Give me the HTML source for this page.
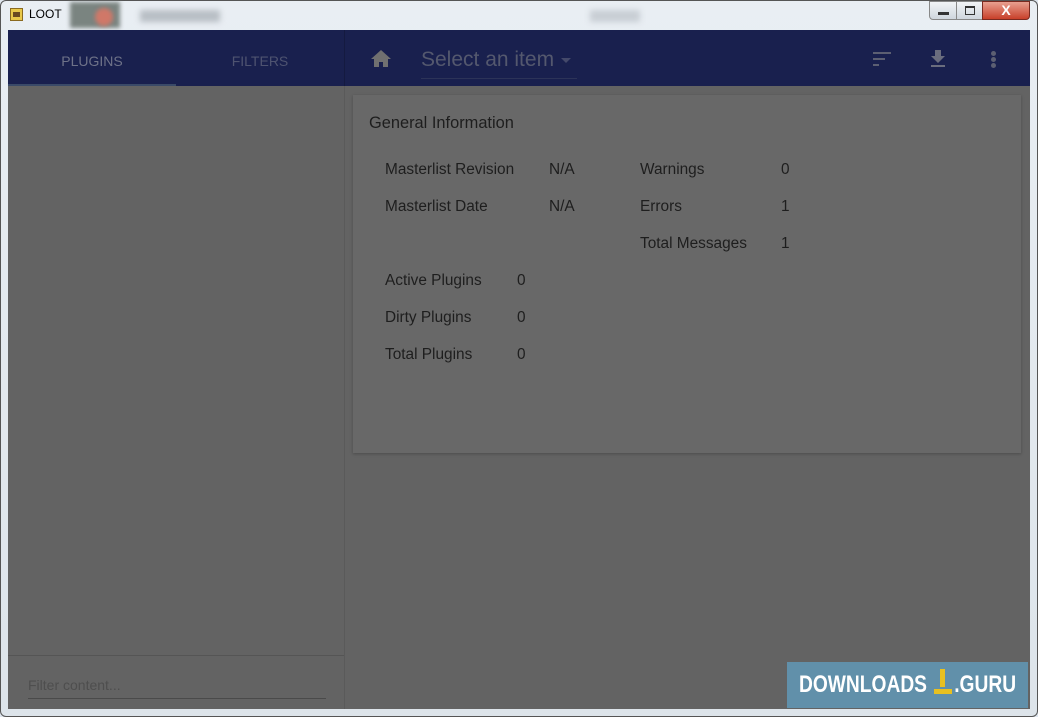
<!DOCTYPE html>
<html><head><style>
*{margin:0;padding:0;box-sizing:border-box}
html,body{width:1038px;height:717px;overflow:hidden}
body{background:#dfe6ee;font-family:"Liberation Sans",sans-serif;position:relative}
.abs{position:absolute}
.frame{left:0;top:0;width:1038px;height:717px;border:1px solid #555;border-radius:6px;background:linear-gradient(#e9eef3,#dde4ea)}
.t{color:#1e1e1e;font-size:15.4px;white-space:nowrap}
</style></head><body>
<div class="abs frame"></div>
<div class="abs" style="left:70px;top:2px;width:50px;height:26px;background:#7a8480;filter:blur(2px)"></div>
<div class="abs" style="left:95px;top:8px;width:18px;height:18px;border-radius:50%;background:#d07868;filter:blur(2px)"></div>
<div class="abs" style="left:140px;top:10px;width:80px;height:12px;background:#b8bec4;filter:blur(3px)"></div>
<div class="abs" style="left:590px;top:10px;width:50px;height:12px;background:#c8ced4;filter:blur(3px)"></div>
<div class="abs" style="left:10px;top:8px;width:13px;height:13px;background:#e8c84a;border:1px solid #8a6a20"><div class="abs" style="left:2px;top:3px;width:7px;height:5px;background:#6a4a20"></div></div>
<div class="abs" style="left:29px;top:7px;font-size:12px;color:#000">LOOT</div>
<div class="abs" style="left:929px;top:1px;width:28px;height:19px;border:1px solid #888;border-radius:0 0 0 4px;background:linear-gradient(#f2f4f6,#cfd6dd)"><div class="abs" style="left:8px;top:10px;width:11px;height:3px;background:#333"></div></div>
<div class="abs" style="left:956px;top:1px;width:27px;height:19px;border:1px solid #888;background:linear-gradient(#f2f4f6,#cfd6dd)"><div class="abs" style="left:8px;top:4px;width:10px;height:9px;border:1px solid #333;border-top-width:2px"></div></div>
<div class="abs" style="left:982px;top:1px;width:48px;height:19px;border:1px solid #7a2a20;border-radius:0 0 4px 0;background:linear-gradient(#e8a090,#c8402a);color:#fff;font-weight:bold;font-size:14px;text-align:center;line-height:17px">X</div>
<!-- app -->
<div class="abs" style="left:8px;top:30px;width:1022px;height:679px;background:#636363"></div>
<div class="abs" style="left:8px;top:30px;width:1022px;height:56px;background:#19204e"></div>
<div class="abs" style="left:344px;top:30px;width:1px;height:679px;background:#5a5a5a"></div>
<div class="abs" style="left:344px;top:30px;width:1px;height:56px;background:#141a40"></div>
<div class="abs" style="left:8px;top:53px;width:168px;text-align:center;font-size:14px;color:#6e7288">PLUGINS</div>
<div class="abs" style="left:176px;top:53px;width:168px;text-align:center;font-size:14px;color:#4e5370">FILTERS</div>
<div class="abs" style="left:8px;top:84px;width:168px;height:2px;background:#3a4a68"></div>
<svg class="abs" style="left:370px;top:49px" width="22" height="20" viewBox="0 0 22 20"><path d="M11 1L1 10h3v8h5v-5h4v5h5v-8h3z" fill="#707070"/></svg>
<div class="abs" style="left:421px;top:48px;font-size:21px;color:#54586e;white-space:nowrap">Select an item</div>
<div class="abs" style="left:561px;top:58px;width:0;height:0;border:5px solid transparent;border-top-color:#44496a"></div>
<div class="abs" style="left:421px;top:78px;width:156px;height:1px;background:#2c3358"></div>
<div class="abs" style="left:873px;top:52px;width:18px;height:2px;background:#5c5f72"></div>
<div class="abs" style="left:873px;top:58px;width:12px;height:2px;background:#5c5f72"></div>
<div class="abs" style="left:873px;top:64px;width:6px;height:2px;background:#5c5f72"></div>
<svg class="abs" style="left:929px;top:50px" width="18" height="18" viewBox="0 0 18 18"><path d="M6 0h6v6h4l-7 7-7-7h4z" fill="#6a6d7e"/><rect x="2" y="15" width="14" height="2" fill="#6a6d7e"/></svg>
<div class="abs" style="left:991px;top:51px;width:5px;height:5px;border-radius:50%;background:#5c5f72;box-shadow:0 6px 0 #5c5f72,0 12px 0 #5c5f72"></div>
<!-- card -->
<div class="abs" style="left:353px;top:95px;width:668px;height:358px;background:#686868;box-shadow:0 1px 3px rgba(0,0,0,.25)"></div>
<div class="abs t" style="left:369px;top:114px;font-size:16.4px">General Information</div>
<div class="abs t" style="left:385px;top:161px">Masterlist Revision</div><div class="abs t" style="left:549px;top:161px">N/A</div>
<div class="abs t" style="left:385px;top:198px">Masterlist Date</div><div class="abs t" style="left:549px;top:198px">N/A</div>
<div class="abs t" style="left:640px;top:161px">Warnings</div><div class="abs t" style="left:781px;top:161px">0</div>
<div class="abs t" style="left:640px;top:198px">Errors</div><div class="abs t" style="left:781px;top:198px">1</div>
<div class="abs t" style="left:640px;top:235px">Total Messages</div><div class="abs t" style="left:781px;top:235px">1</div>
<div class="abs t" style="left:385px;top:272px">Active Plugins</div><div class="abs t" style="left:517px;top:272px">0</div>
<div class="abs t" style="left:385px;top:309px">Dirty Plugins</div><div class="abs t" style="left:517px;top:309px">0</div>
<div class="abs t" style="left:385px;top:346px">Total Plugins</div><div class="abs t" style="left:517px;top:346px">0</div>
<!-- filter -->
<div class="abs" style="left:8px;top:655px;width:336px;height:1px;background:#555"></div>
<div class="abs" style="left:28px;top:677px;font-size:14px;color:#4e4e4e">Filter content...</div>
<div class="abs" style="left:28px;top:698px;width:298px;height:1px;background:#4a4a4a"></div>
<!-- watermark -->
<div class="abs" style="left:787px;top:662px;width:241px;height:46px;background:#6190aa"></div>
<div class="abs" style="left:799px;top:671px;font-size:24px;font-weight:bold;color:#fff;transform:scaleX(.8);transform-origin:left;white-space:nowrap">DOWNLOADS<span style="display:inline-block;width:34px"></span>.GURU</div>
<div class="abs" style="left:940px;top:669px;width:5px;height:18px;background:#e8c020"></div>
<div class="abs" style="left:934px;top:689px;width:18px;height:5px;background:#e8c020"></div>
</body></html>
